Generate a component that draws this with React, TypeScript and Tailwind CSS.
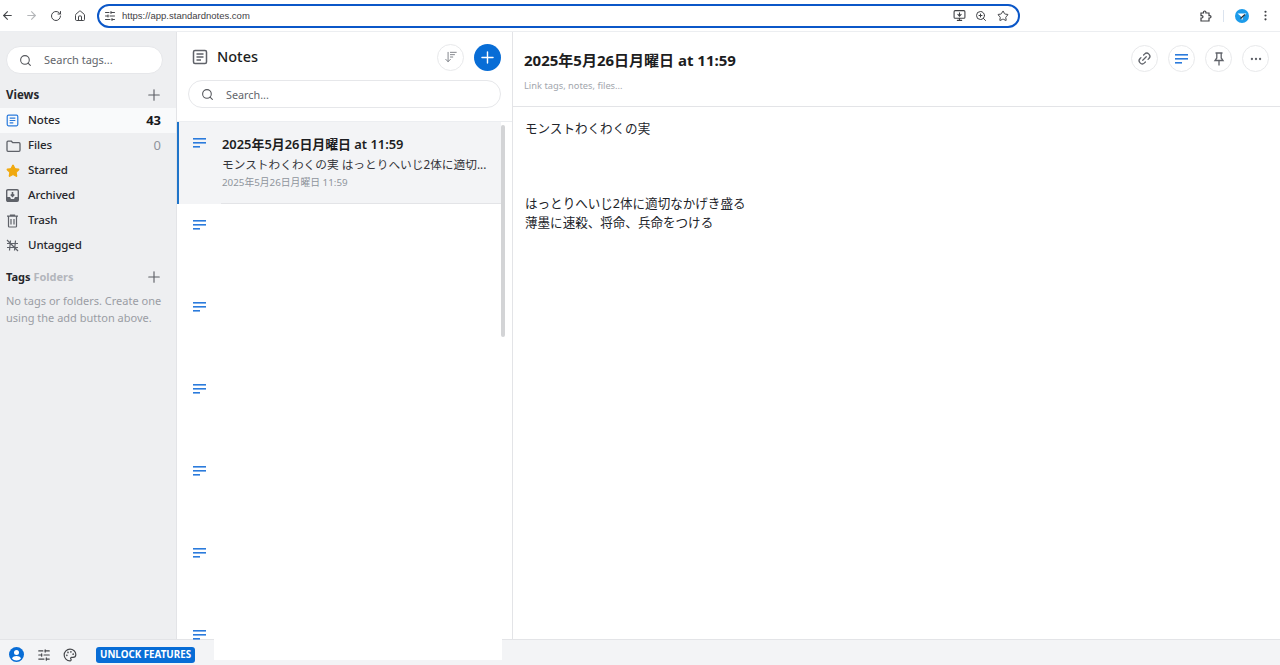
import { Plus, Search, ArrowLeft, ArrowRight, RotateCw, Home, SlidersHorizontal, ZoomIn, Star, MoreVertical, Link2, MoreHorizontal, MonitorDown, Palette, ArrowDownWideNarrow } from "lucide-react";

function PlainIcon({ className = "" }: { className?: string }) {
  return (
    <svg className={className} width="14" height="10" viewBox="0 0 14 10" fill="#2b7bdc" aria-hidden>
      <rect x="0" y="0" width="13" height="1.6" />
      <rect x="0" y="4" width="13" height="1.6" />
      <rect x="0" y="8" width="7" height="1.6" />
    </svg>
  );
}

function NotesIcon({ size, className = "" }: { size: number; className?: string }) {
  return (
    <svg className={className} width={size} height={size} viewBox="0 0 16 16" fill="none" stroke="currentColor" strokeWidth="1.5" aria-hidden>
      <rect x="1.5" y="1.5" width="13" height="13" rx="1.5" />
      <path d="M4.5 5h7M4.5 8h7M4.5 11h4.5" />
    </svg>
  );
}

function FolderIcon() {
  return (
    <svg className="text-[#5f6269]" width="15" height="14" viewBox="0 0 15 14" fill="none" stroke="currentColor" strokeWidth="1.3" aria-hidden>
      <path d="M1 3.2c0-.6.4-1 1-1h3.4l1.3 1.5H13c.6 0 1 .4 1 1v6.6c0 .6-.4 1-1 1H2c-.6 0-1-.4-1-1z" />
    </svg>
  );
}

function ArchiveIcon() {
  return (
    <svg className="text-[#5f6269]" width="13" height="13" viewBox="0 0 13 13" aria-hidden>
      <rect x="0.7" y="0.7" width="11.6" height="11.6" rx="1.2" fill="none" stroke="currentColor" strokeWidth="1.4" />
      <path d="M1 8h3l1 2h3l1-2h3v4H1z" fill="currentColor" />
      <path d="M6.5 3v4M4.8 5.500l1.700 1.800 1.700-1.800" fill="none" stroke="currentColor" strokeWidth="1.6" />
    </svg>
  );
}

function TrashIcon() {
  return (
    <svg className="text-[#5f6269]" width="13" height="14" viewBox="0 0 13 14" fill="none" stroke="currentColor" strokeWidth="1.2" aria-hidden>
      <path d="M1 2.200h11M4.500 2V1h4v1M2.500 2.400v9.800c0 .5.3.8.8.8h6.400c.5 0 .8-.3.8-.8V2.400M5 5v5.500M8 5v5.500" />
    </svg>
  );
}

function UntaggedIcon() {
  return (
    <svg className="text-[#5f6269]" width="13" height="13" viewBox="0 0 13 13" fill="none" stroke="currentColor" strokeWidth="1.2" aria-hidden>
      <path d="M1 1l11 11M4.500 1.500l-1 10M9.500 1.500l-1 10M1 4.500h11M1 8.500h11" />
    </svg>
  );
}

function PinIcon() {
  return (
    <svg className="text-[#5f6269]" width="12" height="14" viewBox="0 0 12 14" fill="none" stroke="currentColor" strokeWidth="1.3" aria-hidden>
      <path d="M2.500 1h7M3.800 1v5L2 8.500h8L8.200 6V1M6 8.500V13.500" />
    </svg>
  );
}

function UserIcon() {
  return (
    <svg width="15" height="15" viewBox="0 0 15 15" aria-hidden>
      <circle cx="7.5" cy="7.5" r="7.5" fill="#086dd6" />
      <circle cx="7.5" cy="5.6" r="2.5" fill="white" />
      <path d="M3 11.400c.8-1.700 2.500-2.400 4.500-2.400s3.700.7 4.500 2.400c-1 1.200-2.700 2-4.500 2s-3.500-.8-4.500-2z" fill="white" />
    </svg>
  );
}

function ExtensionIcon() {
  return (
    <svg width="12" height="12" viewBox="0 0 12 12" fill="none" stroke="currentColor" strokeWidth="1.2" aria-hidden>
      <path d="M1 3h2.500V2.200a1.200 1.200 0 0 1 2.400 0V3H9v2.600h.8a1.200 1.200 0 0 1 0 2.400H9v3H1V8h.8a1.200 1.200 0 0 0 0-2.400H1z" />
    </svg>
  );
}

function ProfileIcon() {
  return (
    <svg width="14" height="14" viewBox="0 0 14 14" aria-hidden>
      <circle cx="7" cy="7" r="7" fill="#1c9bea" />
      <path d="M2.500 4.500h9L8.500 7.200 7 11.500 5.800 7.200z" fill="white" />
      <path d="M5.500 9.500L10 5.500" stroke="#27303a" strokeWidth="1.300" />
    </svg>
  );
}

function SideRow({ icon, label, count, active }: { icon: React.ReactNode; label: string; count?: string; active?: boolean }) {
  return (
    <div className={`flex h-[25px] items-center pl-[6px] pr-[15px] ${active ? "bg-[#f9fafb]" : ""}`}>
      <span className="flex w-[22px] items-center">{icon}</span>
      <span className="flex-1 pb-[1px] text-[11.5px] font-medium tracking-[-0.1px] text-[#26272c]">{label}</span>
      {count ? <span className={`text-[13px] ${active ? "font-bold text-[#17181c]" : "text-[#8f949c]"}`}>{count}</span> : null}
    </div>
  );
}

function CircleButton({ children }: { children: React.ReactNode }) {
  return <div className="flex h-[27px] w-[27px] items-center justify-center rounded-full border border-[#e8e9eb] bg-white">{children}</div>;
}

export default function App() {
  const emptyRows = [0, 1, 2, 3, 4, 5];

  return (
    <div className="flex h-[665px] w-[1280px] flex-col overflow-hidden bg-white text-[#1c1d21]" style={{ fontFamily: '"Noto Sans", "Noto Sans CJK JP", sans-serif' }}>
      <div className="flex h-[32px] shrink-0 items-center border-b border-[#eceef1] bg-white">
        <div className="flex w-[97px] items-center text-[#45474b]">
          <ArrowLeft size={13} strokeWidth={2} className="ml-[1px]" />
          <ArrowRight size={13} strokeWidth={2} className="ml-[11px] text-[#b4b6b9]" />
          <RotateCw size={12} strokeWidth={2} className="ml-[12px]" />
          <Home size={12} strokeWidth={2} className="ml-[12px]" />
        </div>
        <div className="flex h-[24px] w-[923px] items-center rounded-full border-2 border-[#0b57c8] pl-[5px] pr-[9px]">
          <SlidersHorizontal size={12} className="text-[#45474b]" />
          <span className="ml-[6px] flex-1 pt-[1px] text-[9.5px] text-[#3f4145]" style={{ fontFamily: '"Liberation Sans", sans-serif' }}>https://app.standardnotes.com</span>
          <MonitorDown size={13} className="text-[#3f4145]" />
          <ZoomIn size={12} className="ml-[9px] text-[#3f4145]" />
          <Star size={12} strokeWidth={2} className="ml-[10px] text-[#3f4145]" />
        </div>
        <div className="flex flex-1 items-center pl-[180px] text-[#3f4145]">
          <ExtensionIcon />
          <span className="ml-[11px] h-[12px] w-px bg-[#dbe3ee]" />
          <span className="ml-[11px]"><ProfileIcon /></span>
          <MoreVertical size={13} className="ml-[10px]" />
        </div>
      </div>

      <div className="flex min-h-0 flex-1">
        <aside className="flex w-[177px] shrink-0 flex-col border-r border-[#e3e4e7] bg-[#eeeff1]">
          <div className="ml-[6px] mr-[13px] mt-[14px] flex h-[28px] items-center rounded-full border border-[#e6e7ea] bg-white pl-[12px]">
            <Search size={13} className="text-[#55575c]" />
            <span className="ml-[12px] pt-[1px] text-[11px] text-[#62656b]">Search tags...</span>
          </div>
          <div className="mt-[8px] flex h-[26px] items-center pl-[6px] pr-[13px]">
            <span className="flex-1 pb-[1px] text-[11.5px] font-bold text-[#26272c]">Views</span>
            <Plus size={18} strokeWidth={1.5} className="text-[#5b5e64]" />
          </div>
          <SideRow active icon={<NotesIcon size={13} className="text-[#2b7bdc]" />} label="Notes" count="43" />
          <SideRow icon={<FolderIcon />} label="Files" count="0" />
          <SideRow icon={<Star size={14} fill="#f0a90f" className="text-[#f0a90f]" />} label="Starred" />
          <SideRow icon={<ArchiveIcon />} label="Archived" />
          <SideRow icon={<TrashIcon />} label="Trash" />
          <SideRow icon={<UntaggedIcon />} label="Untagged" />
          <div className="mt-[6px] flex h-[26px] items-center pl-[6px] pr-[13px]">
            <span className="flex-1 text-[11px] font-bold text-[#26272c]">
              Tags <span className="text-[#b3b6bc]">Folders</span>
            </span>
            <Plus size={18} strokeWidth={1.5} className="text-[#5b5e64]" />
          </div>
          <p className="mt-[2px] pl-[6px] pr-[10px] text-[11px] leading-[17px] text-[#9a9da4]">No tags or folders. Create one using the add button above.</p>
        </aside>

        <section className="flex w-[336px] shrink-0 flex-col border-r border-[#e3e4e7]">
          <div className="flex h-[48px] items-center pt-[2px] pl-[15px] pr-[11px]">
            <NotesIcon size={16} className="text-[#5f6269]" />
            <span className="ml-[9px] flex-1 text-[14.5px] font-medium">Notes</span>
            <CircleButton><ArrowDownWideNarrow size={14} strokeWidth={1.6} className="text-[#7a7d83]" /></CircleButton>
            <div className="ml-[10px] flex h-[27px] w-[27px] items-center justify-center rounded-full bg-[#086dd6]">
              <Plus size={19} strokeWidth={1.8} className="text-white" />
            </div>
          </div>
          <div className="mx-[11px] flex h-[28px] items-center rounded-full border border-[#e6e7ea] pl-[12px]">
            <Search size={13} className="text-[#55575c]" />
            <span className="ml-[12px] pt-[2px] text-[10.8px] text-[#62656b]">Search...</span>
          </div>
          <div className="relative mt-[13px] min-h-0 flex-1 border-t border-[#eceef1]">
            <div className="flex h-[82px] w-[324px] border-l-2 border-[#1f74c9] bg-[#f3f4f6]">
              <PlainIcon className="ml-[14px] mt-[16px]" />
              <div className="ml-[14px] flex-1 border-b border-[#e3e4e7] pt-[12px] pl-[1px]">
                <div className="text-[12.9px] leading-[20px] font-semibold">2025年5月26日月曜日 at 11:59</div>
                <div className="text-[11.7px] leading-[20px] text-[#33353a]">モンストわくわくの実 はっとりへいじ2体に適切...</div>
                <div className="text-[9.8px] leading-[18px] text-[#8f949c]">2025年5月26日月曜日 11:59</div>
              </div>
            </div>
            {emptyRows.map((row) => (
              <div key={row} className="h-[82px] pl-[16px] pt-[16px]">
                <PlainIcon />
              </div>
            ))}
            <div className="absolute right-[7px] top-[3px] h-[212px] w-[4px] rounded-full bg-[#d3d4d6]" />
          </div>
        </section>

        <main className="flex min-w-0 flex-1 flex-col">
          <div className="h-[75px] shrink-0 border-b border-[#e3e4e7] pl-[11px] pr-[11px]">
            <div className="flex items-center pt-[13px]">
              <h1 className="flex-1 pt-[3px] text-[15px] font-bold">2025年5月26日月曜日 at 11:59</h1>
              <div className="flex gap-[10px]">
                <CircleButton><Link2 size={15} className="-rotate-45 text-[#5f6269]" /></CircleButton>
                <CircleButton><PlainIcon className="ml-[1px]" /></CircleButton>
                <CircleButton><PinIcon /></CircleButton>
                <CircleButton><MoreHorizontal size={14} className="text-[#5f6269]" /></CircleButton>
              </div>
            </div>
            <div className="mt-[7px] text-[9.3px] text-[#a2a6ad]">Link tags, notes, files...</div>
          </div>
          <div className="pl-[12px] pt-[12px] text-[12.55px] leading-[19.5px] text-[#22242a]">
            <p>モンストわくわくの実</p>
            <p className="mt-[55px]">はっとりへいじ2体に適切なかげき盛る</p>
            <p>薄墨に速殺、将命、兵命をつける</p>
          </div>
        </main>
      </div>

      <footer className="flex h-[26px] shrink-0 bg-[#f3f4f6]">
        <div className="flex w-[214px] items-center border-t border-[#e3e4e7] pl-[9px] pt-[4px]">
          <UserIcon />
          <SlidersHorizontal size={14} className="ml-[13px] text-[#45474b]" />
          <Palette size={14} className="ml-[12px] text-[#45474b]" />
          <span className="ml-[19px] rounded-[3px] bg-[#086dd6] px-[4px] text-[9.8px] leading-[16px] font-bold text-white">UNLOCK FEATURES</span>
        </div>
        <div className="h-[21px] w-[288px] bg-white" />
        <div className="flex-1 border-t border-[#e3e4e7]" />
      </footer>
    </div>
  );
}
